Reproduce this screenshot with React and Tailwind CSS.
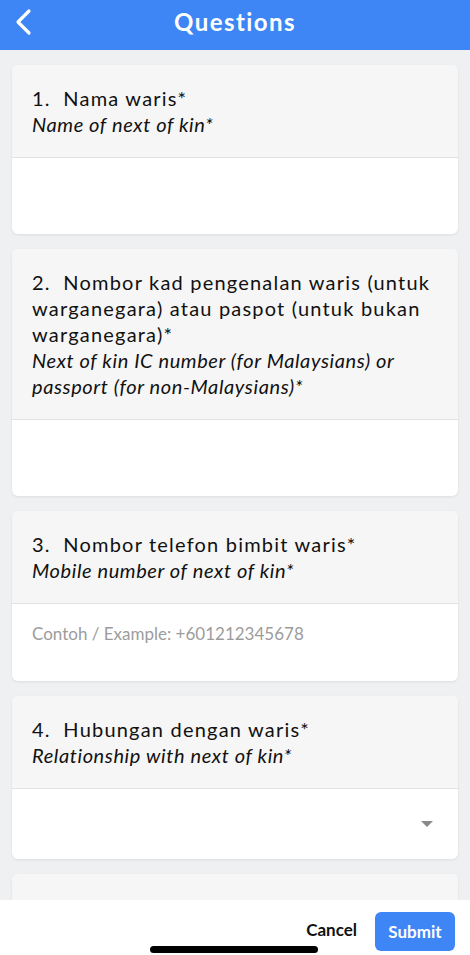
import React from "react";

const font = { fontFamily: "Lato, 'Open Sans', sans-serif" };

function Card({ lines, en, children }) {
  return (
    <div className="rounded-md bg-white shadow-[0_1px_3px_rgba(0,0,0,0.08)] overflow-hidden">
      <div className="bg-[#f6f6f6] px-5 pt-[20px] pb-[20px] border-b border-[#e2e2e2]">
        <div className="text-[20px] leading-[26px] text-[#111] tracking-[0.06em]">
          {lines}
        </div>
        <div className="text-[20px] leading-[26px] text-[#111] italic tracking-[0.03em]">{en}</div>
      </div>
      {children}
    </div>
  );
}

export default function App() {
  return (
    <div className="relative w-[470px] h-[955px] overflow-hidden bg-[#eef0f1]" style={font}>
      <div className="h-[50px] bg-[#3e85f5] relative">
        <svg className="absolute left-[13px] top-[8px]" width="20" height="28" viewBox="0 0 20 28" fill="none">
          <path d="M16 3 L5 14 L16 25" stroke="white" strokeWidth="3.2" strokeLinecap="round" strokeLinejoin="round" />
        </svg>
        <div className="text-center text-white font-bold text-[24px] leading-[44px] tracking-[0.06em]">
          Questions
        </div>
      </div>
      <div className="px-3 pt-[15px] flex flex-col gap-[15px]">
        <Card lines={"1.\u00a0\u00a0Nama waris*"} en="Name of next of kin*">
          <div className="h-[76px]" />
        </Card>
        <Card
          lines={"2.\u00a0\u00a0Nombor kad pengenalan waris (untuk warganegara) atau paspot (untuk bukan warganegara)*"}
          en={<>Next of kin IC number (for Malaysians) or<br />passport (for non-Malaysians)*</>}
        >
          <div className="h-[76px]" />
        </Card>
        <Card lines={"3.\u00a0\u00a0Nombor telefon bimbit waris*"} en="Mobile number of next of kin*">
          <div className="h-[77px] px-5 pt-[20px] text-[17px] leading-[20px] text-[#9c9c9c]">
            Contoh / Example: +601212345678
          </div>
        </Card>
        <Card lines={"4.\u00a0\u00a0Hubungan dengan waris*"} en="Relationship with next of kin*">
          <div className="h-[70px] flex items-center justify-end pr-[25px]">
            <svg width="12" height="6" viewBox="0 0 12 6">
              <path d="M0 0 L12 0 L6 6 Z" fill="#8a8a8a" />
            </svg>
          </div>
        </Card>
        <Card lines={"5.\u00a0\u00a0Adakah anda mempunyai sebarang penyakit"} en="Do you have any illness">
          <div className="h-[76px]" />
        </Card>
      </div>
      <div className="absolute left-0 right-0 bottom-0 h-[55px] bg-white">
        <div className="flex items-start justify-end pr-[15px] pt-[12px] gap-[18px]">
          <div className="text-[17px] leading-[20px] font-bold text-[#111] mt-[8px]">Cancel</div>
          <div className="w-[80px] h-[39px] rounded-md bg-[#3e85f5] text-white font-bold text-[17px] flex items-center justify-center">
            Submit
          </div>
        </div>
        <div className="absolute left-[150px] bottom-[2px] w-[168px] h-[7px] rounded-full bg-black" />
      </div>
    </div>
  );
}
